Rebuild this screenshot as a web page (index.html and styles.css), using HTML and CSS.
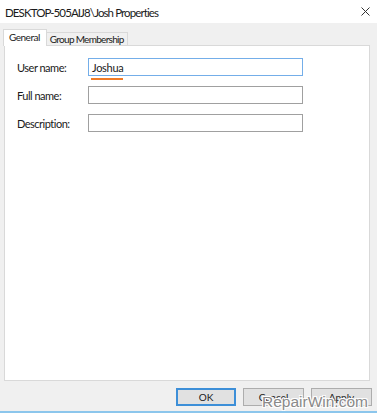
FILE: index.html
```html
<!DOCTYPE html>
<html lang="en">
<head>
  <meta charset="UTF-8">
  <meta name="viewport" content="width=device-width, initial-scale=1.0">
  <title>Josh Properties</title>
  <link rel="stylesheet" href="styles.css">
</head>
<body>
  <div class="janela">
    <div class="titulo">
      <span>DESKTOP-505AIJ8\Josh Properties</span>
      <svg class="fechar" width="9" height="9" viewBox="0 0 9 9">
        <path d="M0.5 0.5 L8.5 8.5 M8.5 0.5 L0.5 8.5" stroke="#333" stroke-width="1" fill="none"/>
      </svg>
    </div>

    <div class="abas">
      <div class="aba ativa">General</div>
      <div class="aba">Group Membership</div>
    </div>

    <div class="painel">
      <div class="linha">
        <label>User name:</label>
        <div class="campo foco">
          <span class="valor">Joshua</span>
          <span class="sublinhado"></span>
        </div>
      </div>
      <div class="linha">
        <label>Full name:</label>
        <div class="campo"></div>
      </div>
      <div class="linha">
        <label>Description:</label>
        <div class="campo"></div>
      </div>
    </div>

    <div class="rodape">
      <button class="padrao">OK</button>
      <button>Cancel</button>
      <button>Apply</button>
      <div class="marca">RepairWin.com</div>
    </div>
    <div class="linha-azul"></div>
  </div>
</body>
</html>
```

FILE: styles.css
```css
* {
  box-sizing: border-box;
}

body {
  margin: 0;
  font-family: "Lato", "Noto Sans", sans-serif;
  font-size: 11px;
  color: #1a1a1a;
  background: #f0f0f0;
}

.janela {
  width: 377px;
  height: 413px;
  position: relative;
  overflow: hidden;
}

.titulo {
  height: 23px;
  background: white;
  display: flex;
  align-items: center;
  justify-content: space-between;
  padding: 0 7px 0 5px;
  font-size: 11.5px;
  letter-spacing: -0.9px;
}

.titulo span {
  padding-top: 1px;
}

.abas {
  height: 22px;
  display: flex;
  align-items: flex-end;
  padding-left: 3px;
}

.aba {
  height: 13px;
  padding: 0 3px;
  border: 1px solid #d9d9d9;
  border-bottom: none;
  background: #f0f0f0;
  font-size: 10px;
  letter-spacing: -0.7px;
  line-height: 13px;
}

.aba.ativa {
  height: 17px;
  background: white;
  padding: 0 6px 0 5px;
  margin-bottom: -1px;
  position: relative;
  z-index: 1;
  line-height: 15px;
  letter-spacing: -0.5px;
}

.abas .aba + .aba {
  border-left: none;
}

.painel {
  height: 336px;
  margin: 0 7px 0 4px;
  background: white;
  border: 1px solid #d9d9d9;
  padding: 12px 0 0 12px;
  display: flex;
  flex-direction: column;
  gap: 10px;
}

.linha {
  display: flex;
  align-items: center;
}

.linha label {
  width: 71px;
  font-size: 11px;
  letter-spacing: -0.5px;
}

.campo {
  width: 215px;
  height: 18px;
  border: 1px solid #a0a0a0;
  position: relative;
}

.campo.foco {
  border-color: #74aee9;
}

.valor {
  position: absolute;
  left: 3px;
  top: 2px;
  font-size: 11px;
  letter-spacing: -0.3px;
}

.sublinhado {
  position: absolute;
  left: 2px;
  top: 19px;
  width: 32px;
  height: 2px;
  background: #f07a26;
}

.rodape {
  display: flex;
  justify-content: flex-end;
  gap: 7px;
  padding: 7px 5px 0 0;
  height: 30px;
  position: relative;
}

.rodape button {
  width: 61px;
  height: 18px;
  background: #e1e1e1;
  border: 1px solid #adadad;
  font-family: "Lato", "Noto Sans", sans-serif;
  font-size: 10px;
  color: #1a1a1a;
  padding: 0;
}

.rodape button.padrao {
  width: 60px;
  border: 2px solid #3d8fd8;
}

.marca {
  position: absolute;
  left: 262px;
  top: 13px;
  font-family: "Liberation Sans", sans-serif;
  font-size: 15.5px;
  line-height: 16px;
  color: #8a8a8a;
  text-shadow: 1px 1px 0 white, -1px -1px 0 white, 1px -1px 0 white, -1px 1px 0 white;
}

.linha-azul {
  height: 2px;
  background: #8cc6ec;
}
```
